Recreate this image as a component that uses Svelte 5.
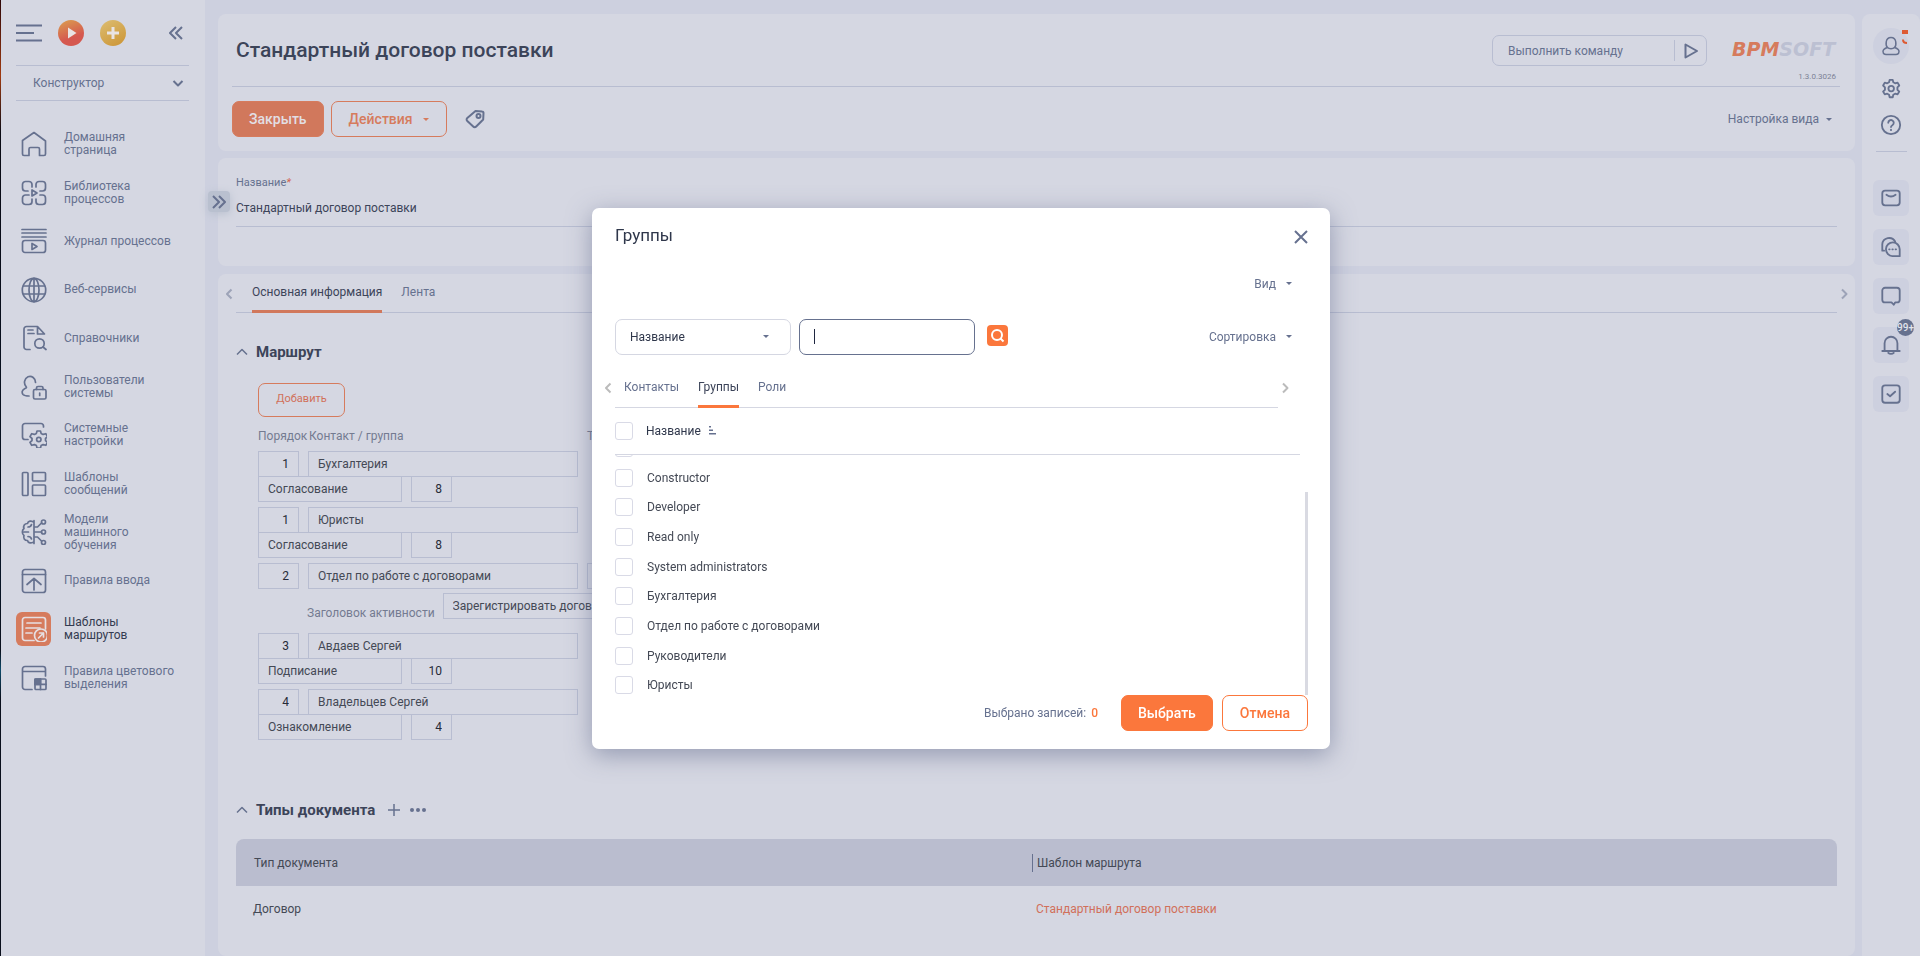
<script lang="ts">
  type MenuItem = { icon: string; label: string; active?: boolean };
  type Step = { order: number; contact: string; action?: string; days?: number; activity?: string };

  const icons: Record<string, string> = {
    home: '<path d="M1.5 9.5 13 1.5l11.500 8.500V23a1.500 1.500 0 0 1-1.500 1.500h-4.500V18a1.500 1.500 0 0 0-1.500-1.500H9.500A1.500 1.500 0 0 0 8 18v6.500H3A1.500 1.500 0 0 1 1.500 23Z"/>',
    library:
      '<path d="M11 7V4.500a3 3 0 0 0-3-3H4.500a3 3 0 0 0-3 3V8a3 3 0 0 0 3 3H7M15 7V4.500a3 3 0 0 1 3-3h3.500a3 3 0 0 1 3 3V8a3 3 0 0 1-3 3H19M11 19v2.500a3 3 0 0 1-3 3H4.500a3 3 0 0 1-3-3V18a3 3 0 0 1 3-3H8M15 19v2.500a3 3 0 0 0 3 3h3.500a3 3 0 0 0 3-3V18a3 3 0 0 0-3-3H19M11 10v6l5-3Z"/>',
    journal:
      '<path d="M1 1.500h24M1 5h24M1 9h24"/><rect x="1.500" y="12.500" width="23" height="12" rx="2.500"/><path d="M11 15.500v6l5-3Z"/>',
    globe:
      '<circle cx="13" cy="13" r="11.700"/><ellipse cx="13" cy="13" rx="5" ry="11.700"/><path d="M13 1.500v23M2.500 9h21M2.500 17h21"/>',
    lookup:
      '<path d="M9 24.500H5.500a2.500 2.500 0 0 1-2.500-2.500V4a2.500 2.500 0 0 1 2.500-2.500h11l7 7.500h-7V1.500M7 5h5M7 8.500h6"/><circle cx="18.500" cy="18.500" r="4.700"/><path d="m22 22 3 2.500"/>',
    users:
      '<path d="M14.500 8.500a5.500 6 0 1 0-9.500 4c.8 1 .5 1.500-1 2C1 16 .5 18.500 2 20.500c1 1 3 1.500 6 1.500"/><rect x="12.500" y="15.500" width="12.500" height="9.500" rx="1.500"/><path d="M15.500 15.500v-1.500a1.500 1.500 0 0 1 1.500-1.500h3.500a1.500 1.500 0 0 1 1.500 1.500v1.500M18.700 19v2.500"/>',
    system:
      '<path d="M22.500 5V4a2.500 2.500 0 0 0-2.500-2.500H4A2.500 2.500 0 0 0 1.500 4v11A2.500 2.500 0 0 0 4 17.500h3"/><path d="m16 9-.6 2.400-2 1-2.700-.7-1.700 3L11 16.500v2l-2 1.800 1.700 3 2.700-.7 2 1L16 26h3.500l.6-2.400 2-1 2.700.7 1.700-3-2-1.800v-2l2-1.800-1.700-3-2.700.7-2-1L19.500 9Z"/><circle cx="17.800" cy="17.500" r="2.200"/>',
    templates:
      '<rect x="1.500" y="1.500" width="5.500" height="23" rx="1"/><rect x="11.500" y="1.500" width="13" height="8.500" rx="1"/><rect x="11.500" y="14" width="13" height="10.500" rx="1"/>',
    ml: '<path d="M13 3.500C10.500 1 7 2 6.500 4.500 3.500 4.500 2 7 3 9.500.8 11 .8 15 3 16.500c-1 2.500.5 5 3.500 5 .5 2.500 4 3.500 6.500 1M13 1.500v23M7 8c2 0 3-.5 3.500-2.500M3 13h4.500M7 17.500c2 0 3 .5 3.500 2.500M13 8h3.500l4-4M13 13h7.500M13 18h3.500l4 4"/><circle cx="22.500" cy="3" r="2"/><circle cx="22.500" cy="13" r="2"/><circle cx="22.500" cy="23.500" r="2"/>',
    rules:
      '<rect x="1.500" y="1.500" width="23" height="23" rx="2.500"/><path d="M1.500 6.500h23M13 22V10.500M6 16.500l7-6 7 6"/>',
    route:
      '<path d="M13 24.500H4A2.500 2.500 0 0 1 1.500 22V4A2.500 2.500 0 0 1 4 1.500h18A2.500 2.500 0 0 1 24.500 4v9M6 7h14M5 12h14M5 17h6"/><circle cx="20" cy="19.500" r="6.500"/><path d="m17.500 22 5-5M18.500 17h4v4"/>',
    color:
      '<path d="M11 24.500H4A2.500 2.500 0 0 1 1.500 22V4A2.500 2.500 0 0 1 4 1.500h18A2.500 2.500 0 0 1 24.500 4v7M1.500 6.500h23"/><rect x="14" y="14" width="11" height="10.500" rx="1"/><path d="M19.500 14v10.500M14 19.300h11"/><path d="M14 14h5.500v5.300H14Z" fill="currentColor"/>',
    gear: '<path d="m10.500 2-.6 2.700-2 1.100-2.700-.8L3.400 8.200l2 2v2.600l-2 2 1.800 3.100 2.700-.8 2 1.200.6 2.700h3.400l.6-2.700 2-1.200 2.700.8 1.800-3.100-2-2v-2.600l2-2L19.200 5l-2.700.8-2-1.100L13.900 2Z"/><circle cx="12.200" cy="11.500" r="3"/>',
    help: '<circle cx="12" cy="12" r="10"/><path d="M9 9.500a3 3 0 1 1 4.500 2.700c-1 .6-1.500 1-1.500 2M12 17v.6"/>',
    mail: '<rect x="2.500" y="4" width="19" height="16" rx="3"/><path d="M7 8.500c3 2.300 7 2.300 10 0"/>',
    chats:
      '<path d="M4.500 16H2.500V9a7.500 7.500 0 0 1 14-3"/><path d="M21.500 22h-8a7.500 7.500 0 1 1 8-7.500Z"/><path d="M10 14.500h.5M13.500 14.500h.5M17 14.500h.5"/>',
    chat: '<path d="M5.500 3h13a3 3 0 0 1 3 3v10a3 3 0 0 1-3 3h-2L15 21.500 12.500 19h-7a3 3 0 0 1-3-3V6a3 3 0 0 1 3-3Z"/>',
    bell: '<path d="M2.500 18.500h19M5 18.500V10a7 7 0 0 1 14 0v8.500M9 20.500c1.500 1.500 4.500 1.500 6 0"/>',
    task: '<rect x="2.500" y="2.500" width="19" height="19" rx="3"/><path d="m8 12 3 2.500 5.500-5"/>',
  };

  const menu: MenuItem[] = [
    { icon: "home", label: "Домашняя страница" },
    { icon: "library", label: "Библиотека процессов" },
    { icon: "journal", label: "Журнал процессов" },
    { icon: "globe", label: "Веб-сервисы" },
    { icon: "lookup", label: "Справочники" },
    { icon: "users", label: "Пользователи системы" },
    { icon: "system", label: "Системные настройки" },
    { icon: "templates", label: "Шаблоны сообщений" },
    { icon: "ml", label: "Модели\nмашинного обучения" },
    { icon: "rules", label: "Правила ввода" },
    { icon: "route", label: "Шаблоны маршрутов", active: true },
    { icon: "color", label: "Правила цветового выделения" },
  ];

  const steps: Step[] = [
    { order: 1, contact: "Бухгалтерия", action: "Согласование", days: 8 },
    { order: 1, contact: "Юристы", action: "Согласование", days: 8 },
    { order: 2, contact: "Отдел по работе с договорами", activity: "Зарегистрировать договор" },
    { order: 3, contact: "Авдаев Сергей", action: "Подписание", days: 10 },
    { order: 4, contact: "Владельцев Сергей", action: "Ознакомление", days: 4 },
  ];

  const panel = [
    { icon: "mail", title: "Почта" },
    { icon: "chats", title: "Чаты" },
    { icon: "chat", title: "Лента" },
    { icon: "bell", title: "Уведомления", badge: "99+" },
    { icon: "task", title: "Задачи" },
  ];

  const groups = [
    "All portal users",
    "Constructor",
    "Developer",
    "Read only",
    "System administrators",
    "Бухгалтерия",
    "Отдел по работе с договорами",
    "Руководители",
    "Юристы",
  ];

  let search = $state("");
  let open = $state(true);
  let checked = $state<string[]>([]);
</script>

{#snippet caret()}
  <svg class="caret" viewBox="0 0 6 3"><path d="M0 0h6L3 3Z" /></svg>
{/snippet}

{#snippet chevron(d: string)}
  <svg class="chevron" viewBox="0 0 12 12"><path {d} /></svg>
{/snippet}

<div class="app">
  <nav class="sidebar">
    <div class="top">
      <button class="plain" aria-label="Меню">
        <svg width="26" height="18" viewBox="0 0 26 18" class="line"><path d="M0 1.500h26M0 9h18M0 16.500h26" /></svg>
      </button>
      <button class="round play" aria-label="Запустить процесс">
        <svg width="26" height="26" viewBox="0 0 26 26"><path d="M10 7.500v11l8.500-5.500Z" /></svg>
      </button>
      <button class="round plus" aria-label="Добавить запись">
        <svg width="26" height="26" viewBox="0 0 26 26"><path d="M11.500 7h3v4.500H19v3h-4.500V19h-3v-4.500H7v-3h4.500Z" /></svg>
      </button>
      <button class="plain collapse" aria-label="Свернуть">
        <svg width="14" height="14" viewBox="0 0 14 14" class="line"><path d="M7 1 1 7l6 6M13 1 7 7l6 6" /></svg>
      </button>
    </div>
    <button class="workplace">
      Конструктор
      {@render chevron("M1.500 4 6 8.500 10.500 4")}
    </button>
    <ul class="menu">
      {#each menu as item}
        <li>
          <a href="#{item.icon}" class:active={item.active}>
            <span class="tile"><svg viewBox="0 0 26 26">{@html icons[item.icon]}</svg></span>
            <span class="text">{item.label}</span>
          </a>
        </li>
      {/each}
    </ul>
  </nav>

  <main>
    <button class="expander" aria-label="Развернуть">
      <svg width="14" height="14" viewBox="0 0 14 14" class="line"><path d="m1 1 6 6-6 6M7 1l6 6-6 6" /></svg>
    </button>

    <header class="card header">
      <div class="title-row">
        <h1>Стандартный договор поставки</h1>
        <div class="command">
          <input type="text" placeholder="Выполнить команду" aria-label="Выполнить команду" />
          <button aria-label="Выполнить">
            <svg width="14" height="16" viewBox="0 0 14 16" class="line"><path d="M1.500 1.500v13L13 8Z" /></svg>
          </button>
        </div>
        <div class="brand">
          <div class="logo"><b>BPM</b>SOFT</div>
          <small>1.3.0.3026</small>
        </div>
      </div>
      <div class="actions">
        <button class="btn primary">Закрыть</button>
        <button class="btn">Действия {@render caret()}</button>
        <button class="plain" aria-label="Теги">
          <svg width="20" height="20" viewBox="0 0 20 20" class="line"><path d="M10.500 2 17 2.500c1 0 1.500.5 1.500 1.500l-.3 6.500-7 7a2 2 0 0 1-3 0L2.300 12a2 2 0 0 1 0-3Z" /><circle cx="13.500" cy="7" r="2" /></svg>
        </button>
        <button class="plain view">Настройка вида {@render caret()}</button>
      </div>
    </header>

    <section class="card name-card">
      <label for="name">Название<i>*</i></label>
      <input id="name" type="text" value="Стандартный договор поставки" />
    </section>

    <section class="card content">
      <div class="tabs">
        <button class="plain arrow" aria-label="Назад">{@render chevron("M8.500 1.500 4 6l4.500 4.500")}</button>
        <div class="tab-list">
          <button class="tab current">Основная информация</button>
          <button class="tab">Лента</button>
        </div>
        <button class="plain arrow" aria-label="Вперёд">{@render chevron("M4 1.500 8.500 6 4 10.500")}</button>
      </div>

      <h2>{@render chevron("M1 8.500 6 3.500l5 5")} Маршрут</h2>
      <div class="route">
        <button class="add">Добавить</button>
        <div class="heads">
          <span>Порядок</span><span>Контакт / группа</span><span>Тип</span>
        </div>
        {#each steps as step}
          <div class="step" class:wide={step.activity}>
            <div class="line-row">
              <input class="num" type="text" value={step.order} aria-label="Порядок" />
              <input class="contact" type="text" value={step.contact} aria-label="Контакт / группа" />
              {#if step.activity}<input class="contact" type="text" aria-label="Тип" />{/if}
            </div>
            {#if step.activity}
              <label class="activity">Заголовок активности <input type="text" value={step.activity} /></label>
            {:else}
              <div class="line-row second">
                <input class="action" type="text" value={step.action} aria-label="Действие" />
                <input class="num" type="text" value={step.days} aria-label="Срок" />
              </div>
            {/if}
          </div>
        {/each}
      </div>

      <h2>
        {@render chevron("M1 8.500 6 3.500l5 5")} Типы документа
        <button class="plain" aria-label="Добавить тип">
          <svg width="12" height="12" viewBox="0 0 12 12" class="line thin"><path d="M6 0v12M0 6h12" /></svg>
        </button>
        <button class="plain more" aria-label="Ещё">
          <svg width="16" height="4" viewBox="0 0 16 4"><circle cx="2" cy="2" r="2" /><circle cx="8" cy="2" r="2" /><circle cx="14" cy="2" r="2" /></svg>
        </button>
      </h2>
      <table>
        <thead>
          <tr><th>Тип документа</th><th><span>Шаблон маршрута</span></th></tr>
        </thead>
        <tbody>
          <tr><td>Договор</td><td><a href="#template">Стандартный договор поставки</a></td></tr>
        </tbody>
      </table>
    </section>
  </main>

  <aside class="rail">
    <button class="avatar" aria-label="Профиль">
      <svg width="18" height="20" viewBox="0 0 18 20" class="line thin"><path d="M5.500 11.500C3.500 9.500 3 1.500 9 1.500s5.500 8 3.500 10c2 .6 4.500 1.500 4.500 4 0 3.500-3 3-8 3s-8 .5-8-3c0-2.500 2.500-3.400 4.500-4 1.500 1.600 5.500 1.600 7 0" /></svg>
      <svg class="call" width="6" height="16" viewBox="0 0 6 16"><path d="M1 2h4v2H1Z" /><path d="M1 10.500c0 2 1.500 3.500 4 3.500" /></svg>
    </button>
    <button class="plain" aria-label="Настройки"><svg class="rail-icon" viewBox="0 0 24 24">{@html icons.gear}</svg></button>
    <button class="plain" aria-label="Помощь"><svg class="rail-icon" viewBox="0 0 24 24">{@html icons.help}</svg></button>
    <hr />
    <div class="panel">
      {#each panel as item}
        <button aria-label={item.title}>
          <svg class="rail-icon" viewBox="0 0 24 24">{@html icons[item.icon]}</svg>
          {#if item.badge}<span class="badge">{item.badge}</span>{/if}
        </button>
      {/each}
    </div>
  </aside>
</div>

{#if open}
  <div class="overlay">
    <div class="modal" role="dialog" aria-modal="true" aria-labelledby="modal-title">
      <div class="modal-head">
        <h3 id="modal-title">Группы</h3>
        <button class="plain" aria-label="Закрыть окно" onclick={() => (open = false)}>
          <svg width="14" height="14" viewBox="0 0 14 14" class="line"><path d="m1 1 12 12M13 1 1 13" /></svg>
        </button>
      </div>
      <div class="modal-view"><button class="plain">Вид {@render caret()}</button></div>
      <div class="filters">
        <div class="select">
          <select aria-label="Колонка поиска"><option>Название</option></select>
          {@render caret()}
        </div>
        <div class="search">
          <input type="text" aria-label="Значение поиска" bind:value={search} />
          {#if !search}<span class="cursor"></span>{/if}
        </div>
        <button class="find" aria-label="Найти">
          <svg width="21" height="21" viewBox="0 0 21 21"><circle cx="10" cy="10" r="5" /><path d="m13.500 13.500 3 3" /></svg>
        </button>
        <button class="plain sort">Сортировка {@render caret()}</button>
      </div>
      <div class="tabs modal-tabs">
        <button class="plain arrow" aria-label="Назад">{@render chevron("M8.500 1.500 4 6l4.500 4.500")}</button>
        <div class="tab-list">
          <button class="tab">Контакты</button>
          <button class="tab current">Группы</button>
          <button class="tab">Роли</button>
        </div>
        <button class="plain arrow" aria-label="Вперёд">{@render chevron("M4 1.500 8.500 6 4 10.500")}</button>
      </div>
      <div class="grid-head">
        <input id="all" type="checkbox" />
        <label for="all">Название</label>
        <svg width="7" height="9" viewBox="0 0 7 9"><path d="M0 .8h2M0 4.300h4M0 7.800h7" /></svg>
      </div>
      <div class="viewport">
        <ul>
          {#each groups as group, i}
            <li>
              <input id="group-{i}" type="checkbox" value={group} bind:group={checked} />
              <label for="group-{i}">{group}</label>
            </li>
          {/each}
        </ul>
        <span class="thumb"></span>
      </div>
      <div class="modal-foot">
        <span>Выбрано записей: <b>{checked.length}</b></span>
        <button class="btn primary">Выбрать</button>
        <button class="btn" onclick={() => (open = false)}>Отмена</button>
      </div>
    </div>
  </div>
{/if}

<style>
  :global(body) {
    background: #cdd0df;
    overflow: hidden;
  }

  .app,
  .overlay {
    font-family: Roboto, "Noto Sans", sans-serif;
    font-size: 12px;
    color: #444955;
  }

  .app {
    display: flex;
    height: 100vh;
    overflow: hidden;
  }

  * {
    box-sizing: border-box;
  }

  button,
  input,
  select {
    font: inherit;
    color: inherit;
    padding: 0;
    border: none;
    background: none;
    outline: none;
    min-width: 0;
  }

  button {
    cursor: pointer;
  }

  ul {
    list-style: none;
    margin: 0;
    padding: 0;
  }

  svg {
    display: block;
    flex: none;
  }

  a {
    text-decoration: none;
  }

  .plain {
    display: flex;
    align-items: center;
    color: #66718f;
  }

  .line,
  .chevron {
    fill: none;
    stroke: #66718f;
    stroke-width: 2;
    stroke-linejoin: round;
  }

  .thin {
    stroke-width: 1.5;
  }

  .chevron {
    width: 12px;
    height: 12px;
  }

  .caret {
    width: 6px;
    height: 3px;
    fill: currentColor;
  }

  /* sidebar */
  .sidebar {
    width: 205px;
    flex: none;
    padding: 0 16px 0 15px;
    background: #d5d7e2;
    border-left: 1px solid #0a0f1c;
    border-image: linear-gradient(#2b0508, #a03a10 8%, #0a0a14 14%, #071426 60%, #0a0f1c 68%, #0d4a6a 70%, #0a0f1c 73%) 1;
  }

  .top {
    display: flex;
    align-items: center;
    gap: 16px;
    height: 66px;
    border-bottom: 1px solid #b8bdd1;
  }

  .round {
    width: 26px;
    height: 26px;
    border-radius: 50%;
  }

  .round svg {
    fill: #e9e4e4;
  }

  .play {
    background: linear-gradient(160deg, #dba04f, #d5584f 65%);
  }

  .plus {
    background: linear-gradient(150deg, #dcbd72, #cc9434);
  }

  .collapse {
    margin-left: auto;
    margin-right: 6px;
  }

  .workplace {
    display: flex;
    align-items: center;
    justify-content: space-between;
    width: 100%;
    height: 35px;
    padding: 0 5px 1px 17px;
    border-bottom: 1px solid #b8bdd1;
    color: #66718f;
  }

  .menu {
    display: grid;
    grid-auto-rows: 1fr;
    height: 582px;
    margin-top: 19px;
  }

  .menu li,
  .menu a {
    display: flex;
    align-items: center;
  }

  .menu a {
    gap: 13px;
    color: #66718f;
    line-height: 13px;
  }

  .text {
    width: 113px;
    white-space: pre-line;
  }

  .tile {
    display: flex;
    align-items: center;
    justify-content: center;
    width: 35px;
    height: 34px;
    border-radius: 6px;
  }

  .tile svg,
  .rail-icon {
    width: 26px;
    height: 26px;
    fill: none;
    stroke: currentColor;
    stroke-width: 1.7;
    stroke-linejoin: round;
    stroke-linecap: round;
  }

  .active .tile {
    background: #d67b5d;
    color: #e6dfe2;
  }

  .menu .active {
    color: #343b50;
  }

  /* page */
  main {
    position: relative;
    flex: 1;
    min-width: 0;
    display: flex;
    flex-direction: column;
    gap: 7px;
    padding: 14px 7px 0 13px;
  }

  .card {
    background: #d5d7e2;
    border-radius: 8px;
  }

  .expander {
    position: absolute;
    left: 3px;
    top: 191px;
    display: flex;
    align-items: center;
    justify-content: center;
    width: 22px;
    height: 21px;
    border-radius: 4px;
    background: #b9c0cf;
    box-shadow: 0 2px 8px #b9c0cf;
  }

  .header {
    height: 137px;
    padding: 0 15px 0 14px;
  }

  .title-row {
    display: flex;
    align-items: flex-start;
    height: 73px;
    border-bottom: 1px solid #b8bdd1;
  }

  h1 {
    flex: 1;
    margin: 0;
    padding: 22px 0 0 4px;
    font-size: 21px;
    line-height: 28px;
    font-weight: 500;
    color: #3c4459;
  }

  .command {
    display: flex;
    align-items: center;
    width: 215px;
    height: 31px;
    margin: 21px 25px 0 0;
    border: 1px solid #b8bdd1;
    border-radius: 7px;
  }

  .command input {
    flex: 1;
    padding-left: 15px;
  }

  .command input::placeholder {
    color: #66718f;
  }

  .command button {
    width: 32px;
    height: 21px;
    padding-left: 9px;
    border-left: 1px solid #b8bdd1;
  }

  .brand {
    width: 108px;
    padding-top: 24px;
  }

  .logo {
    font: italic 700 19px/22px "DejaVu Sans", sans-serif;
    color: #bcc0d2;
  }

  .logo b {
    color: #d67b5d;
  }

  small {
    display: block;
    margin: 12px 4px 0 0;
    font-size: 8px;
    line-height: 10px;
    text-align: right;
    color: #7c8296;
  }

  .actions {
    display: flex;
    align-items: center;
    gap: 7px;
    margin-top: 14px;
  }

  .actions .plain {
    margin-left: 11px;
  }

  .actions .view {
    gap: 7px;
    margin: 0 8px 0 auto;
  }

  .btn {
    display: flex;
    align-items: center;
    justify-content: center;
    gap: 10px;
    height: 36px;
    padding: 0 17px;
    border: 1px solid #d67b5d;
    border-radius: 7px;
    font-size: 14px;
    font-weight: 500;
    color: #d67b5d;
  }

  .btn.primary {
    padding: 0 16px;
    background: #d1785c;
    color: #e2dfe4;
  }

  .name-card {
    display: flex;
    flex-direction: column;
    height: 108px;
    padding: 17px 18px 0;
  }

  .name-card label {
    font-size: 11px;
    line-height: 16px;
    color: #66718f;
  }

  .name-card i {
    color: #d1604c;
  }

  .name-card input {
    height: 36px;
    padding-bottom: 2px;
    border-bottom: 1px solid #b8bdd1;
    color: #3c4459;
  }

  .content {
    flex: 1;
    padding: 0 18px;
    margin-top: 1px;
  }

  .tabs {
    display: flex;
    align-items: center;
    height: 39px;
    margin: 0 -13px;
  }

  .tabs .arrow {
    height: 36px;
    opacity: 0.5;
  }

  .tab-list {
    flex: 1;
    display: flex;
    align-self: stretch;
    margin: 0 1px;
    padding-left: 16px;
    gap: 19px;
    box-shadow: inset 0 -1px #b8bdd1;
  }

  .tab {
    padding: 0 0 3px;
    color: #66718f;
  }

  .tab.current {
    color: #3c4459;
    box-shadow: inset 0 -3px #d1785c;
  }

  h2 {
    display: flex;
    align-items: center;
    gap: 8px;
    margin: 0;
    padding: 28px 0 18px;
    font-size: 15px;
    line-height: 22px;
    font-weight: 700;
    color: #3c4459;
  }

  h2 .chevron {
    stroke-width: 1.5;
  }

  h2 .plain {
    margin-left: 5px;
  }

  h2 .more {
    margin-left: 2px;
    fill: #66718f;
  }

  .route {
    padding: 2px 0 26px 22px;
  }

  .add {
    display: block;
    width: 87px;
    height: 34px;
    padding-bottom: 3px;
    border: 1px solid #d67b5d;
    border-radius: 7px;
    font-size: 11px;
    color: #d1705a;
  }

  .heads {
    display: grid;
    grid-template-columns: 51px 278px 1fr;
    padding: 11px 0 7px;
    line-height: 16px;
    color: #747b91;
  }

  .step {
    margin-bottom: 5px;
  }

  .step.wide {
    margin-bottom: 14px;
  }

  .line-row {
    display: flex;
    gap: 9px;
  }

  .second {
    margin-top: -1px;
  }

  .route input {
    height: 26px;
    padding: 0 9px;
    border: 1px solid #b8bdd1;
  }

  .route .num {
    width: 41px;
    text-align: right;
    color: #262b38;
  }

  .contact {
    width: 270px;
  }

  .action {
    width: 144px;
  }

  .activity {
    display: flex;
    align-items: flex-end;
    gap: 8px;
    margin-top: 4px;
    padding-left: 49px;
    line-height: 12px;
    color: #747b91;
  }

  .activity input {
    width: 270px;
    color: #444955;
  }

  table {
    width: 100%;
    border-collapse: collapse;
    table-layout: fixed;
  }

  th {
    height: 47px;
    padding: 0 18px;
    background: #babdcf;
    font-weight: 400;
    text-align: left;
  }

  th:first-child {
    width: 796px;
    border-radius: 8px 0 0 0;
  }

  th:last-child {
    padding-left: 0;
    border-radius: 0 8px 0 0;
  }

  th span {
    border-left: 1px solid #66718f;
    padding: 2px 0 2px 4px;
  }

  td {
    height: 46px;
    padding: 0 17px;
  }

  td:last-child {
    padding-left: 4px;
  }

  td a {
    color: #d1705a;
  }

  /* right rail */
  .rail {
    flex: none;
    width: 58px;
    margin-top: 14px;
    display: flex;
    flex-direction: column;
    align-items: center;
    background: #d5d7e2;
    border-radius: 8px 8px 0 0;
  }

  .avatar {
    position: relative;
    display: flex;
    align-items: center;
    justify-content: center;
    width: 36px;
    height: 36px;
    margin: 14px 0;
    border-radius: 50%;
    background: #cdd0df;
  }

  .call {
    position: absolute;
    top: 1px;
    right: 1px;
    fill: none;
    stroke: #dd5a33;
    stroke-width: 2;
  }

  .rail-icon {
    width: 22px;
    height: 22px;
    stroke-width: 2;
  }

  .rail .plain {
    height: 22px;
    margin-bottom: 14px;
  }

  hr {
    width: 31px;
    margin: 1px 0 28px;
    border: none;
    border-top: 1px solid #b8bdd1;
  }

  .panel {
    display: grid;
    gap: 13px;
  }

  .panel button {
    position: relative;
    display: flex;
    align-items: center;
    justify-content: center;
    width: 36px;
    height: 36px;
    border-radius: 6px;
    background: #cdd0df;
    color: #66718f;
  }

  .badge {
    position: absolute;
    top: -8px;
    right: -5px;
    display: flex;
    align-items: center;
    justify-content: center;
    width: 17px;
    height: 17px;
    border-radius: 50%;
    background: #66718f;
    color: #e2e4ec;
    font-size: 10px;
    font-weight: 500;
  }

  /* lookup window */
  .overlay {
    position: fixed;
    inset: 0;
    display: flex;
    align-items: center;
    justify-content: center;
    padding-left: 2px;
  }

  .modal {
    width: 738px;
    padding: 18px 22px 18px 23px;
    border-radius: 7px;
    background: #fff;
    box-shadow: 0 6px 24px rgba(84, 94, 130, 0.5);
  }

  .modal-head {
    display: flex;
    justify-content: space-between;
    align-items: center;
    height: 22px;
  }

  h3 {
    margin: 0;
    padding-bottom: 3px;
    font-size: 17px;
    font-weight: 400;
    color: #2f374b;
  }

  .modal-view {
    display: flex;
    justify-content: flex-end;
    padding: 26px 16px 25px;
  }

  .modal-view .plain,
  .sort {
    gap: 10px;
    line-height: 20px;
  }

  .filters {
    display: flex;
    align-items: center;
    gap: 8px;
  }

  .select,
  .search {
    position: relative;
    width: 176px;
  }

  .select select,
  .search input {
    display: block;
    width: 100%;
    height: 36px;
    padding: 0 14px;
    border: 1px solid #d5d7e2;
    border-radius: 7px;
    appearance: none;
    color: #2f374b;
  }

  .select .caret {
    position: absolute;
    top: 16px;
    right: 22px;
    color: #66718f;
    pointer-events: none;
  }

  .search input {
    border-color: #66718f;
  }

  .cursor {
    position: absolute;
    left: 15px;
    top: 10px;
    width: 1px;
    height: 15px;
    background: #1f2740;
  }

  .find {
    margin: 0 0 2px 4px;
    border-radius: 4px;
    background: #fb773c;
  }

  .find svg {
    fill: none;
    stroke: #fff;
    stroke-width: 2;
  }

  .sort {
    margin: 0 16px 0 auto;
  }

  .modal-tabs {
    height: 39px;
    margin: 14px 17px 0 -13px;
  }

  .modal-tabs .tab-list {
    padding-left: 9px;
    box-shadow: inset 0 -1px #d5d7e2;
  }

  .modal-tabs .tab.current {
    box-shadow: inset 0 -3px #fb773c;
  }

  .modal-tabs .chevron {
    stroke: #7a7a7a;
  }

  .grid-head {
    display: flex;
    align-items: center;
    height: 47px;
    margin-right: 8px;
    border-bottom: 1px solid #d5d7e2;
    color: #2f374b;
  }

  .grid-head label {
    margin: 0 8px 0 13px;
  }

  .grid-head svg {
    stroke: #66718f;
    stroke-width: 1.5;
  }

  input[type="checkbox"] {
    appearance: none;
    flex: none;
    width: 18px;
    height: 18px;
    margin: 0;
    border: 1px solid #d9dae6;
    border-radius: 3px;
  }

  input[type="checkbox"]:checked {
    background: #fb773c;
  }

  .viewport {
    position: relative;
    display: flex;
    flex-direction: column;
    justify-content: flex-end;
    height: 240px;
    overflow: hidden;
  }

  .viewport ul {
    display: grid;
    grid-auto-rows: 1fr;
    flex: none;
    height: 267px;
  }

  .viewport li {
    display: flex;
    align-items: flex-end;
    gap: 14px;
    line-height: 18px;
  }

  .thumb {
    position: absolute;
    right: 0;
    bottom: 0;
    width: 3px;
    height: 203px;
    background: #d9dae2;
  }

  .modal-foot {
    display: flex;
    align-items: center;
    justify-content: flex-end;
    gap: 9px;
    color: #66718f;
  }

  .modal-foot span {
    margin-right: 14px;
  }

  .modal-foot b {
    margin-left: 2px;
    font-weight: 500;
    color: #fb773c;
  }

  .modal-foot .btn {
    border-color: #fb773c;
    color: #fb773c;
  }

  .modal-foot .primary {
    background: #fb773c;
    color: #fff;
  }
</style>
